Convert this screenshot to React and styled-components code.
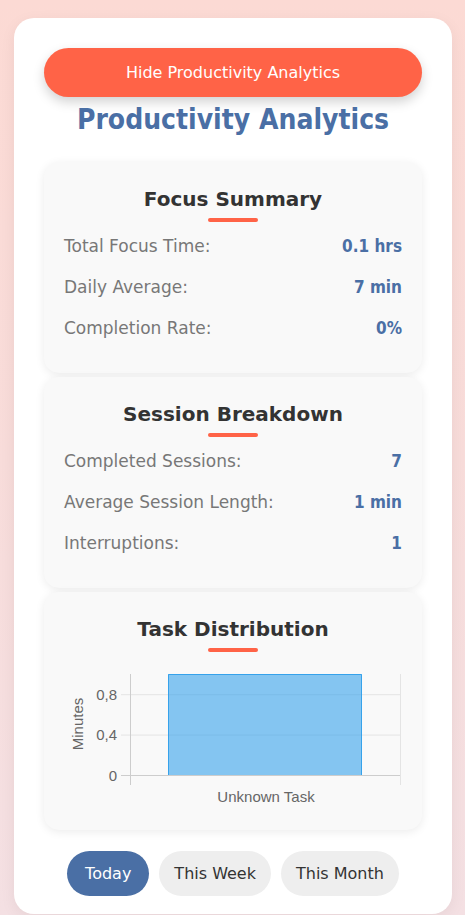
import React, { useState } from "react";
import styled, { createGlobalStyle } from "styled-components";

const Global = createGlobalStyle`
  html, body { margin: 0; padding: 0; }
  body {
    font-family: "DejaVu Sans", "Open Sans", sans-serif;
    background: linear-gradient(180deg, #fcdad4 0%, #f8dcda 50%, #f4e0e3 100%);
    min-height: 915px;
  }
  * { box-sizing: border-box; }
`;

const Page = styled.div`
  padding: 18px 13px 0 14px;
`;

const Panel = styled.div`
  background: #fff;
  border-radius: 20px;
  padding: 30px 30px 18px;
  box-shadow: 0 4px 16px rgba(0, 0, 0, 0.06);
  display: flex;
  flex-direction: column;
`;

const ToggleButton = styled.button`
  height: 49px;
  border: none;
  border-radius: 25px;
  background: #ff6347;
  color: #fff;
  font-family: inherit;
  font-size: 16px;
  box-shadow: 0 5px 12px rgba(0, 0, 0, 0.18);
  cursor: pointer;
`;

const Title = styled.h2`
  margin: 6px 0 25px;
  text-align: center;
  font-family: "DejaVu Sans Condensed", "DejaVu Sans", sans-serif;
  font-size: 28px;
  line-height: 34px;
  font-weight: 700;
  color: #4a6fa5;
`;

const Cards = styled.div`
  display: flex;
  flex-direction: column;
  gap: 4px;
`;

const Card = styled.section`
  background: #f9f9f9;
  border-radius: 15px;
  padding: 20px 20px ${(p) => p.$bottom || 25}px;
  box-shadow: 0 2px 10px rgba(0, 0, 0, 0.08);
`;

const CardTitle = styled.h3`
  margin: 0;
  text-align: center;
  font-size: 20px;
  line-height: 34px;
  font-weight: 700;
  color: #333;
`;

const Underline = styled.div`
  width: 50px;
  height: 4px;
  border-radius: 2px;
  background: #ff6347;
  margin: 2px auto 3px;
`;

const Row = styled.div`
  display: flex;
  justify-content: space-between;
  align-items: center;
  height: 41px;
`;

const Label = styled.span`
  color: #777;
  font-size: 17px;
`;

const Value = styled.span`
  color: #4a6fa5;
  font-family: "DejaVu Sans Condensed", "DejaVu Sans", sans-serif;
  font-size: 17px;
  font-weight: 700;
`;

const ChartWrap = styled.div`
  margin-top: 12px;
`;

const Tabs = styled.div`
  display: flex;
  justify-content: center;
  gap: 10px;
  margin-top: 21px;
`;

const Tab = styled.button`
  height: 45px;
  padding: 0 ${(p) => (p.$active ? 18 : 15)}px;
  border: none;
  border-radius: 23px;
  font-family: inherit;
  font-size: 16px;
  background: ${(p) => (p.$active ? "#4a6fa5" : "#eeeeee")};
  color: ${(p) => (p.$active ? "#fff" : "#333")};
  cursor: pointer;
`;

const chartFont = {
  fontFamily: "Liberation Sans, Arial, sans-serif",
  fontSize: 15,
  fill: "#666",
};

function Chart() {
  const ox = 64;
  const oy = 664;
  const x0 = 130 - ox, x1 = 400 - ox;
  const yTop = 674, yBase = 775;
  const y = (v) => yBase - oy - v * (yBase - yTop);
  const grid = "#e4e4e4";
  const axis = "#cdcdcd";
  return (
    <svg width="337" height="150" viewBox="0 0 337 150" style={{ display: "block" }}>
      {[0.4, 0.8].map((v) => (
        <line key={v} x1={x0 - 9} x2={x1} y1={y(v) + 0.5} y2={y(v) + 0.5} stroke={grid} strokeWidth="1" />
      ))}
      <rect x={168 - ox} y={y(1)} width={194} height={yBase - yTop} fill="rgba(54,162,235,0.6)" />
      <path
        d={`M${168 - ox + 0.5} ${y(0)} V${y(1) + 0.5} H${362 - ox - 0.5} V${y(0)}`}
        fill="none"
        stroke="rgb(54,162,235)"
        strokeWidth="1"
      />
      <line x1={x1 + 0.5} x2={x1 + 0.5} y1={y(1)} y2={y(0) + 10} stroke={grid} strokeWidth="1" />
      <line x1={x0 + 0.5} x2={x0 + 0.5} y1={y(1)} y2={y(0) + 10} stroke={axis} strokeWidth="1" />
      <line x1={x0 - 9} x2={x1} y1={y(0) + 0.5} y2={y(0) + 0.5} stroke={axis} strokeWidth="1" />
      {[
        [0, "0"],
        [0.4, "0,4"],
        [0.8, "0,8"],
      ].map(([v, t]) => (
        <text key={t} x={117 - ox} y={y(v) + 5.5} textAnchor="end" {...chartFont}>
          {t}
        </text>
      ))}
      <text
        x={0}
        y={0}
        transform={`translate(${83 - ox} ${724 - oy}) rotate(-90)`}
        textAnchor="middle"
        {...chartFont}
      >
        Minutes
      </text>
      <text x={266 - ox} y={802 - oy} textAnchor="middle" {...chartFont}>
        Unknown Task
      </text>
    </svg>
  );
}

export default function App() {
  const [range, setRange] = useState("today");
  return (
    <Page>
      <Global />
      <Panel>
        <ToggleButton>Hide Productivity Analytics</ToggleButton>
        <Title>Productivity Analytics</Title>
        <Cards>
          <Card>
            <CardTitle>Focus Summary</CardTitle>
            <Underline />
            <Row><Label>Total Focus Time:</Label><Value>0.1 hrs</Value></Row>
            <Row><Label>Daily Average:</Label><Value>7 min</Value></Row>
            <Row><Label>Completion Rate:</Label><Value>0%</Value></Row>
          </Card>
          <Card>
            <CardTitle>Session Breakdown</CardTitle>
            <Underline />
            <Row><Label>Completed Sessions:</Label><Value>7</Value></Row>
            <Row><Label>Average Session Length:</Label><Value>1 min</Value></Row>
            <Row><Label>Interruptions:</Label><Value>1</Value></Row>
          </Card>
          <Card $bottom={16}>
            <CardTitle>Task Distribution</CardTitle>
            <Underline />
            <ChartWrap>
              <Chart />
            </ChartWrap>
          </Card>
        </Cards>
        <Tabs>
          <Tab $active={range === "today"} onClick={() => setRange("today")}>Today</Tab>
          <Tab $active={range === "week"} onClick={() => setRange("week")}>This Week</Tab>
          <Tab $active={range === "month"} onClick={() => setRange("month")}>This Month</Tab>
        </Tabs>
      </Panel>
    </Page>
  );
}
